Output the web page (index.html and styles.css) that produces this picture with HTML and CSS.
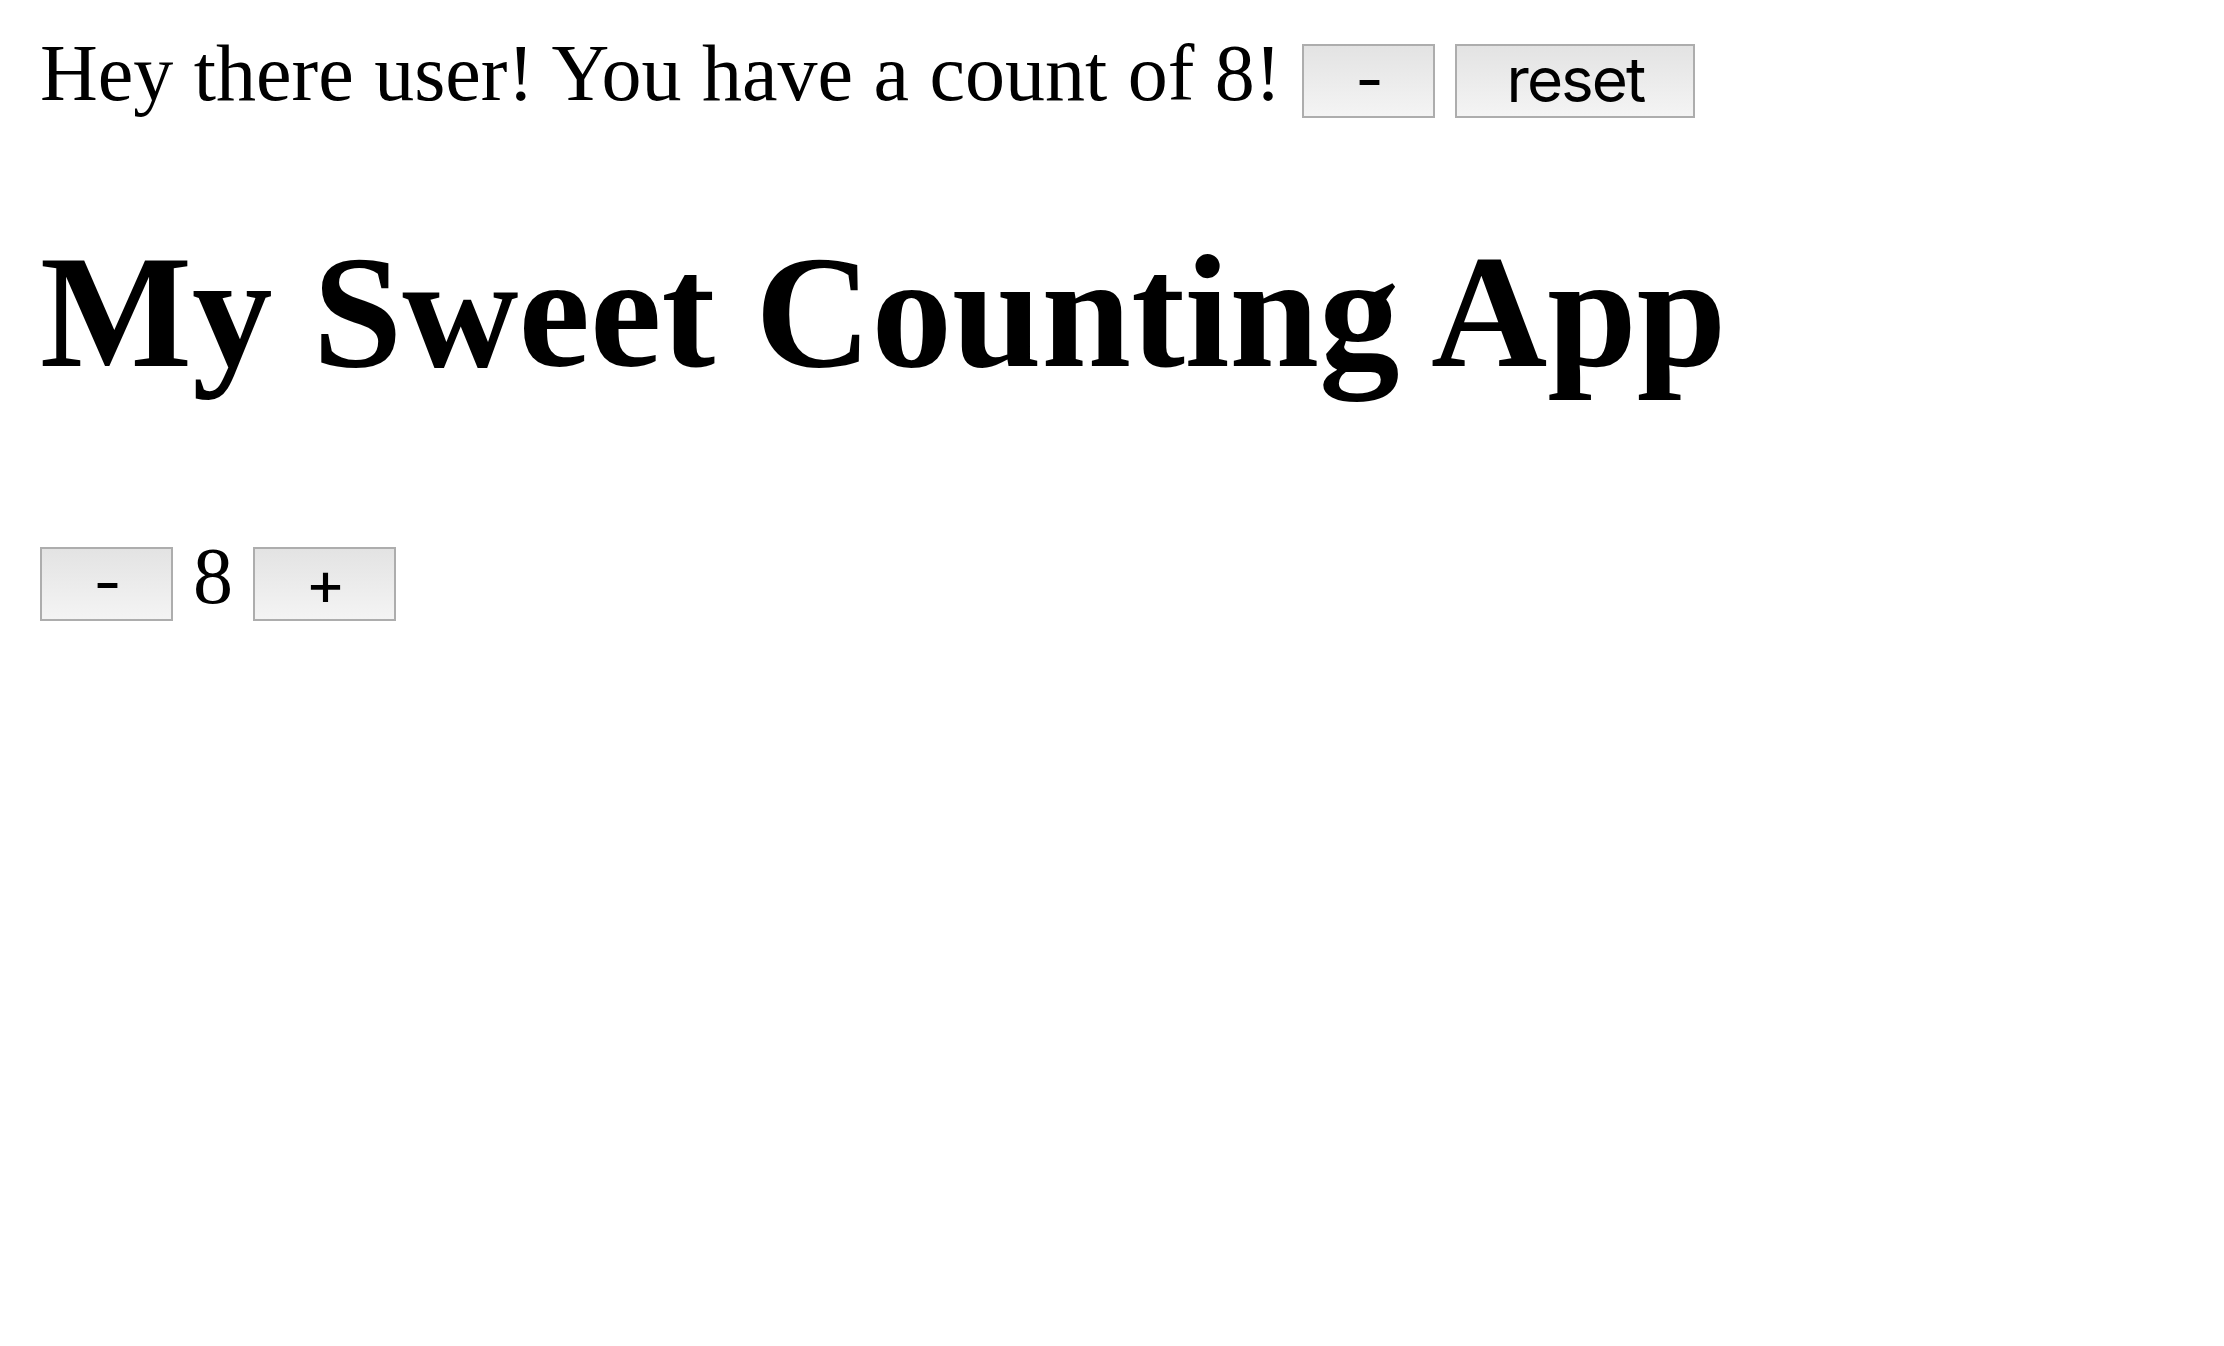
FILE: index.html
```html
<!DOCTYPE html>
<html lang="en">
<head>
<meta charset="utf-8">
<title>My Sweet Counting App</title>
<link rel="stylesheet" href="styles.css">
</head>
<body>
<div class="greeting">Hey there user! You have a count of 8! <button class="btn btn-minus">-</button> <button class="btn btn-reset">reset</button></div>
<h1 class="title">My Sweet Counting App</h1>
<div class="counter"><button class="btn btn-minus">-</button> 8 <button class="btn btn-plus">+</button></div>
</body>
</html>
```
FILE: styles.css
```css
html, body {
  background: #fff;
}
body {
  margin: 40px;
  font-family: "Liberation Serif", "Times New Roman", serif;
  font-size: 80px;
  line-height: 66px;
  color: #000;
}
.greeting {
  margin: 0;
  white-space: nowrap;
  word-spacing: 0.5px;
}
.title {
  font-size: 161px;
  font-weight: bold;
  line-height: normal;
  margin: 102px 0 0;
  white-space: nowrap;
}
.counter {
  margin-top: 138px;
}
.btn {
  font-family: Inter, "Liberation Sans", sans-serif;
  font-size: 62px;
  letter-spacing: -2px;
  word-spacing: 0;
  color: #000;
  height: 74px;
  box-sizing: border-box;
  border: 2px solid #adadad;
  border-radius: 0;
  background: linear-gradient(#e3e3e3, #f4f4f4);
  padding: 5px 0 8px;
  line-height: 57px;
  vertical-align: -2px;
  text-align: center;
  margin: 0;
}
.btn-minus {
  width: 133px;
}
.btn-reset {
  width: 240px;
}
.btn-plus {
  width: 143px;
}
```
